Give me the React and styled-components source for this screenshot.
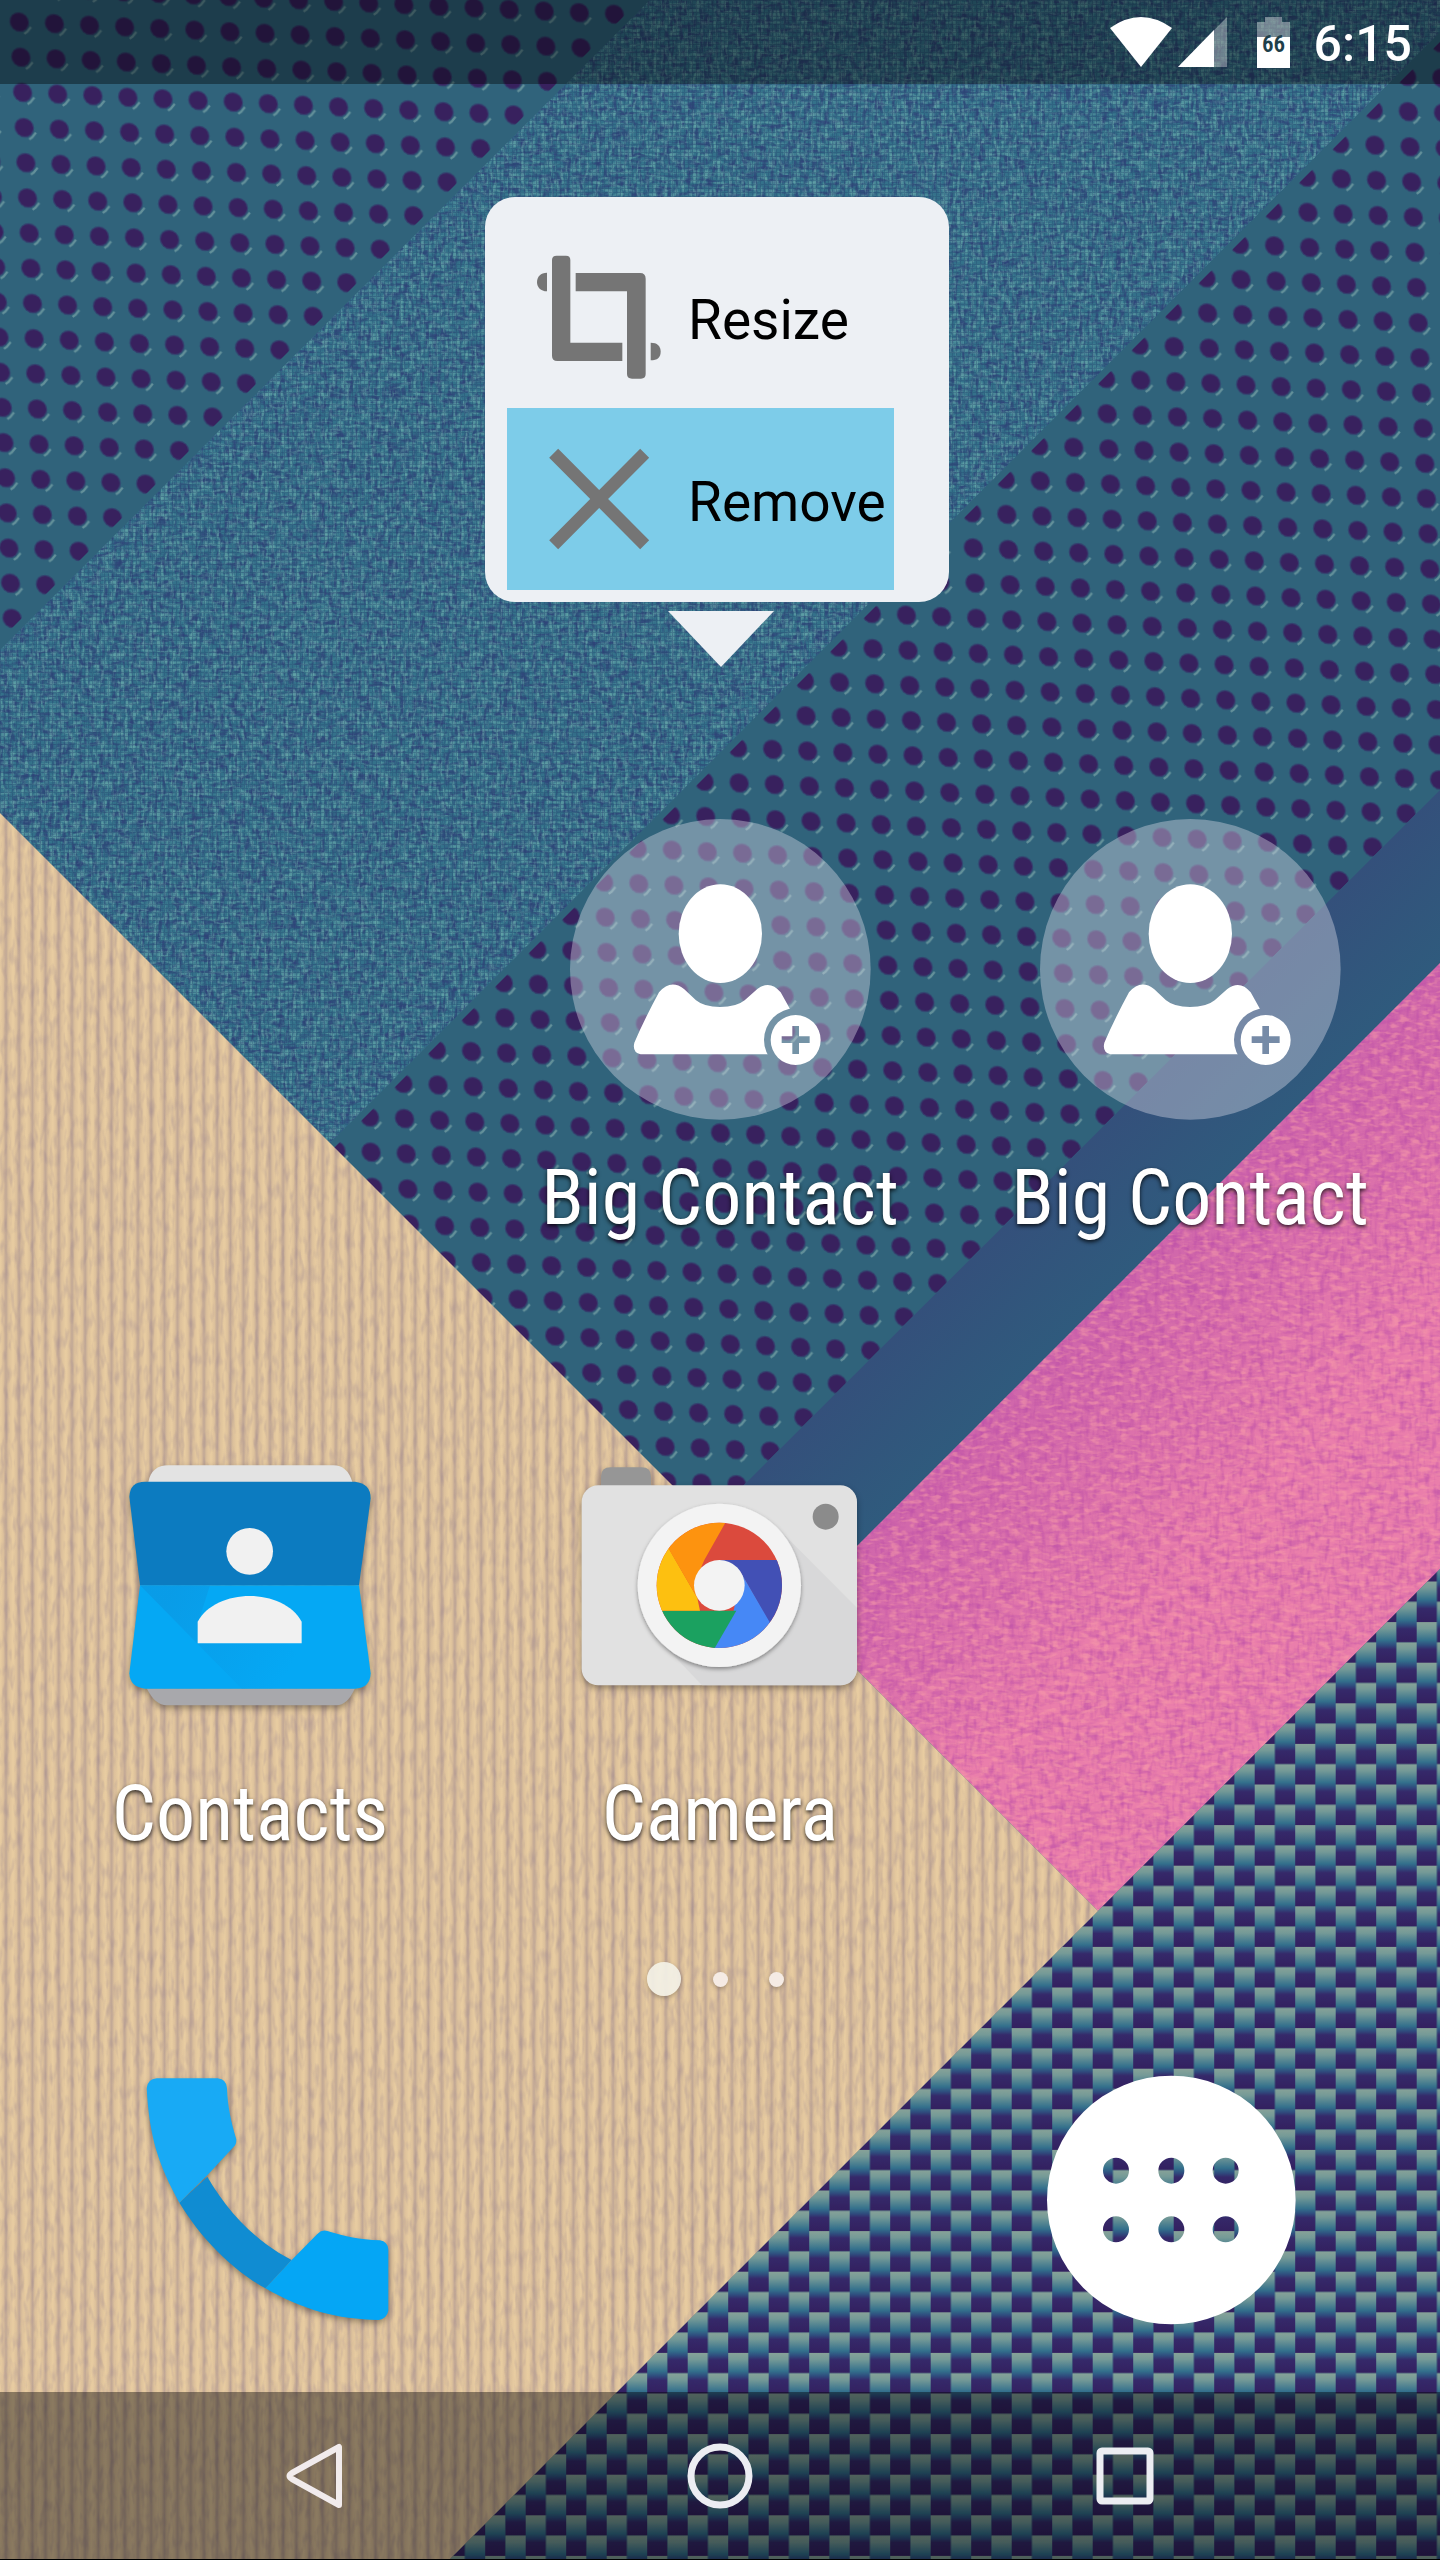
import styled, { createGlobalStyle } from "styled-components";

const GlobalStyle = createGlobalStyle`
  * { box-sizing: border-box; }
  body {
    margin: 0;
    font-family: Roboto, "Noto Sans", sans-serif;
  }
  button {
    border: 0;
    padding: 0;
    background: none;
    color: inherit;
    font: inherit;
    cursor: pointer;
  }
  svg { display: block; }
`;

const Screen = styled.div`
  position: relative;
  display: flex;
  flex-direction: column;
  min-height: 100vh;
  overflow: hidden;
  isolation: isolate;
`;

const WallpaperSvg = styled.svg`
  position: absolute;
  inset: 0;
  z-index: -1;
  width: 100%;
  height: 100%;
`;

const StatusBar = styled.header`
  display: flex;
  align-items: center;
  justify-content: flex-end;
  height: 84px;
  padding-right: 28px;
  background: rgba(0, 0, 0, 0.38);
  color: #fff;
`;

const StatusIcon = styled.svg`
  margin-right: ${({ $gap }) => $gap}px;
`;

const Clock = styled.time`
  padding-top: 4px;
  font-size: 50px;
  line-height: 60px;
  font-weight: 500;
`;

const Workspace = styled.main`
  flex: 1;
  display: grid;
  grid-template-columns: repeat(3, 1fr);
  align-content: end;
  row-gap: 216px;
  padding: 0 15px;
`;

const Cell = styled.div`
  position: relative;
  grid-column: ${({ $column }) => $column};
  display: flex;
  justify-content: center;
`;

const Shortcut = styled.button`
  display: flex;
  flex-direction: column;
  align-items: center;
  gap: ${({ $gap }) => $gap}px;
`;

const ShortcutLabel = styled.span`
  font-family: "Roboto Condensed", Roboto, sans-serif;
  font-size: 78px;
  line-height: 92px;
  color: #fff;
  white-space: nowrap;
  text-shadow: 0 2px 4px rgba(0, 0, 0, 0.8);
`;

const ShadowSvg = styled.svg`
  overflow: visible;
  filter: drop-shadow(0 3px 3px rgba(0, 0, 0, 0.35));
`;

// floats above the widget that was long-pressed
const Popup = styled.div`
  position: absolute;
  bottom: calc(100% + 152px);
  left: 0;
  display: flex;
  flex-direction: column;
  gap: 9px;
`;

const PopupCard = styled.div`
  width: 464px;
  padding: 29px 55px 12px 22px;
  border-radius: 30px;
  background: #edf0f4;
`;

const PopupArrow = styled.svg`
  margin-left: 183px;
`;

const PopupItem = styled.button`
  display: flex;
  align-items: center;
  gap: 27px;
  width: 100%;
  height: 182px;
  padding-left: 30px;
  background: ${({ $active }) => ($active ? "#7dcce9" : "transparent")};
  color: #000;
  font-size: 55px;
  line-height: 66px;
`;

const PopupLabel = styled.span`
  padding-top: 6px;
`;

const PageDots = styled.nav`
  display: flex;
  align-items: center;
  justify-content: center;
  height: 40px;
  margin: 99px 0 76px;
`;

const PageDot = styled.button`
  display: flex;
  justify-content: center;
  width: 56px;
  &::before {
    content: "";
    width: ${({ $active }) => ($active ? 34 : 15)}px;
    height: ${({ $active }) => ($active ? 34 : 15)}px;
    border-radius: 50%;
    background: ${({ $active }) => ($active ? "rgba(243, 241, 230, 0.92)" : "#f5ebe4")};
    box-shadow: 0 2px 4px rgba(0, 0, 0, 0.25);
  }
`;

const Dock = styled.div`
  display: flex;
  justify-content: space-between;
  padding: 0 143px 67px;
`;

const NavBar = styled.nav`
  display: grid;
  grid-template-columns: repeat(3, 1fr);
  height: 168px;
  padding: 0 112px;
  border-bottom: 1px solid #000;
  background: rgba(0, 0, 0, 0.4);
`;

const NavButton = styled.button`
  display: flex;
  align-items: center;
  justify-content: center;
`;

// Noise turned into a single coloured layer: alpha = gain * noise - cut
const ThreadFilter = ({ id, freq, seed, rgb, gain, cut }) => (
  <filter id={id} x="0" y="0" width="100%" height="100%" colorInterpolationFilters="sRGB">
    <feTurbulence type="fractalNoise" baseFrequency={freq} numOctaves="2" seed={seed} />
    <feColorMatrix
      values={`0 0 0 0 ${rgb[0]}  0 0 0 0 ${rgb[1]}  0 0 0 0 ${rgb[2]}  ${gain} 0 0 0 ${-cut}`}
    />
  </filter>
);

const PerforatedPattern = ({ id, x, y }) => (
  <pattern
    id={id}
    width="35"
    height="35"
    patternUnits="userSpaceOnUse"
    patternTransform={`matrix(1.003 .046 .047 1.005 ${x} ${y})`}
  >
    <path d="M22 29 l3 -2 l4 -5" fill="none" stroke="#7fa9ab" strokeWidth="2.2" opacity=".65" />
    <circle cx="17.5" cy="17.5" r="10" fill="#352a66" opacity=".6" />
    <circle cx="17.5" cy="17.5" r="8.8" fill="#38215e" />
  </pattern>
);

const Wallpaper = () => (
  <WallpaperSvg viewBox="0 0 1440 2560" preserveAspectRatio="xMidYMid slice" aria-hidden="true">
    <defs>
      <ThreadFilter id="blueWarp" freq=".24 .07" seed="3" rgb={[0.19, 0.25, 0.47]} gain={4} cut={1.9} />
      <ThreadFilter id="blueWeft" freq=".07 .24" seed="8" rgb={[0.19, 0.25, 0.47]} gain={4} cut={1.95} />
      <ThreadFilter id="blueLightWarp" freq=".28 .1" seed="14" rgb={[0.46, 0.72, 0.7]} gain={4} cut={1.95} />
      <ThreadFilter id="blueLightWeft" freq=".1 .28" seed="21" rgb={[0.42, 0.68, 0.68]} gain={4} cut={1.95} />
      <ThreadFilter id="pinkWarp" freq=".2 .06" seed="5" rgb={[0.72, 0.29, 0.66]} gain={3} cut={1.4} />
      <ThreadFilter id="pinkWeft" freq=".06 .2" seed="9" rgb={[0.72, 0.29, 0.66]} gain={3} cut={1.4} />
      <ThreadFilter id="pinkLight" freq=".1 .22" seed="31" rgb={[0.98, 0.62, 0.66]} gain={4} cut={1.9} />
      <ThreadFilter id="cordNoise" freq=".2 .06" seed="12" rgb={[0.55, 0.47, 0.55]} gain={2.4} cut={1.1} />
      <PerforatedPattern id="perfTop" x={4.2} y={74} />
      <PerforatedPattern id="perfBottom" x={526.6} y={1106.6} />
      <pattern id="grain" width="4" height="4" patternUnits="userSpaceOnUse">
        <path d="M0 .5H4M.5 0V4" stroke="#24466e" strokeWidth="1" opacity=".35" />
      </pattern>
      <linearGradient id="cordShade">
        <stop offset="0" stopColor="#e9cda1" />
        <stop offset=".25" stopColor="#dcc09b" />
        <stop offset=".45" stopColor="#bfa695" />
        <stop offset=".65" stopColor="#dcc09b" />
        <stop offset="1" stopColor="#e9cda1" />
      </linearGradient>
      <pattern id="cord" width="13.2" height="20" patternUnits="userSpaceOnUse">
        <rect width="13.2" height="20" fill="url(#cordShade)" />
      </pattern>
      <linearGradient id="strand" x1="0" y1="0" x2="0" y2="1">
        <stop offset="0" stopColor="#87a298" />
        <stop offset=".16" stopColor="#759a97" />
        <stop offset=".45" stopColor="#33708c" />
        <stop offset=".57" stopColor="#2f4c7e" />
        <stop offset=".67" stopColor="#35296a" />
        <stop offset="1" stopColor="#33205f" />
      </linearGradient>
      <pattern
        id="carbon"
        width="40.5"
        height="40.6"
        patternUnits="userSpaceOnUse"
        patternTransform="translate(1011.7 2109.3)"
      >
        <rect width="20.3" height="40.6" fill="url(#strand)" />
        <rect x="20.3" y="-20.3" width="20.3" height="40.6" fill="url(#strand)" />
        <rect x="20.3" y="20.3" width="20.3" height="40.6" fill="url(#strand)" />
      </pattern>
      <linearGradient id="pinkBase" gradientUnits="userSpaceOnUse" x1="1120" y1="1283" x2="1290" y2="1453">
        <stop offset="0" stopColor="#cf66ab" />
        <stop offset="1" stopColor="#ea7eab" />
      </linearGradient>
      <linearGradient id="band" gradientUnits="userSpaceOnUse" x1="1070" y1="1160" x2="1160" y2="1250">
        <stop offset="0" stopColor="#34507b" />
        <stop offset="1" stopColor="#2f5b7d" />
      </linearGradient>
      <clipPath id="fabricClip"><path d="M650 0 H1472 L330 1143 L0 813 V650Z" /></clipPath>
      <clipPath id="pinkClip"><path d="M1440 963 V1569 L1098 1911 L795 1608Z" /></clipPath>
      <clipPath id="beigeClip"><path d="M0 813 L1098 1911 L449 2560 H0Z" /></clipPath>
    </defs>

    <rect width="1440" height="2560" fill="#30637b" />
    <path d="M0 0 H640 L0 640Z" fill="url(#perfTop)" />
    <g clipPath="url(#fabricClip)">
      <rect width="1440" height="1150" fill="#34718a" />
      <rect width="1440" height="1150" filter="url(#blueWarp)" opacity=".7" />
      <rect width="1440" height="1150" filter="url(#blueWeft)" opacity=".7" />
      <rect width="1440" height="1150" filter="url(#blueLightWarp)" opacity=".5" />
      <rect width="1440" height="1150" filter="url(#blueLightWeft)" opacity=".5" />
      <rect width="1440" height="1150" fill="url(#grain)" />
    </g>
    <path d="M1472 10 L330 1152 L708 1521 L1440 790Z" fill="url(#perfBottom)" />
    <path d="M1440 790 V963 L795 1608 L708 1521Z" fill="url(#band)" />
    <g clipPath="url(#pinkClip)">
      <rect x="790" y="960" width="650" height="960" fill="url(#pinkBase)" />
      <rect x="790" y="960" width="650" height="960" filter="url(#pinkWarp)" opacity=".45" />
      <rect x="790" y="960" width="650" height="960" filter="url(#pinkWeft)" opacity=".45" />
      <rect x="790" y="960" width="650" height="960" filter="url(#pinkLight)" opacity=".5" />
    </g>
    <path d="M1440 1569 V2560 H449Z" fill="url(#carbon)" />
    <g clipPath="url(#beigeClip)">
      <rect y="800" width="1110" height="1760" fill="url(#cord)" />
      <rect y="800" width="1110" height="1760" filter="url(#cordNoise)" opacity=".3" />
    </g>
  </WallpaperSvg>
);

const WifiIcon = () => (
  <StatusIcon $gap={6} width="62" height="50" viewBox="0 0 62 50" aria-label="Wi-Fi">
    <path d="M0 11 Q31 -11 62 11 L31 50Z" fill="#fff" />
  </StatusIcon>
);

const SignalIcon = () => (
  <StatusIcon $gap={30} width="49" height="50" viewBox="0 0 49 50" aria-label="Signal">
    <path d="M49 0 V50 H0Z" fill="#fff" opacity=".35" />
    <path d="M36 13 V50 H0Z" fill="#fff" />
  </StatusIcon>
);

const BatteryIcon = () => (
  <StatusIcon $gap={24} width="33" height="51" viewBox="0 0 33 51" aria-label="Battery 66%">
    <path d="M8 0 H25 V5 H33 V20 H0 V5 H8Z" fill="#fff" opacity=".38" />
    <rect y="20" width="33" height="31" fill="#fff" />
    <text
      x="16.5"
      y="35"
      textAnchor="middle"
      fill="#1f3f4a"
      fontFamily="'Roboto Condensed', Roboto, sans-serif"
      fontSize="23"
      fontWeight="600"
    >
      66
    </text>
  </StatusIcon>
);

const ResizeIcon = () => (
  <svg width="124" height="124" viewBox="199 225 372 372" fill="#757575" aria-hidden="true">
    <path d="M229 278 C210 278 199 290 199 306 C199 322 210 334 229 334Z" />
    <path d="M258 227 H286 Q299 227 299 240 V488 H455 V543 H260 Q244 543 244 527 V240 Q244 227 258 227Z" />
    <path d="M315 279 H508 Q525 279 525 296 V582 Q525 596 511 596 H484 Q469 596 469 582 V334 H315Z" />
    <path d="M540 488 C560 488 570 498 570 515 C570 532 560 541 540 541Z" />
  </svg>
);

const CrossIcon = () => (
  <svg width="124" height="124" viewBox="197 771 372 372" aria-hidden="true">
    <path d="M247 820 L520 1094 M520 820 L247 1094" stroke="#757575" strokeWidth="38" />
  </svg>
);

const BigContactIcon = () => (
  <svg width="301" height="301" viewBox="118 57 903 903" aria-hidden="true">
    <mask id="badgeGap">
      <rect x="118" y="57" width="903" height="903" fill="#fff" />
      <circle cx="795" cy="720" r="95" fill="#000" />
    </mask>
    <circle cx="569" cy="508" r="451" fill="#dddbe8" opacity=".4" />
    <ellipse cx="569" cy="401" rx="125" ry="148" fill="#fff" />
    <path
      mask="url(#badgeGap)"
      d="M385 577 Q420 536 460 567 L496 601 Q520 621 568 621 Q618 621 642 601 L680 567 Q718 538 750 577 L830 720 V763 H330 Q304 758 311 728 Q340 660 385 577Z"
      fill="#fff"
    />
    <path
      fillRule="evenodd"
      d="M720 720 a75 75 0 1 0 150 0 a75 75 0 1 0 -150 0Z M785 678 H805 V709 H837 V729 H805 V762 H785 V729 H753 V709 H785Z"
      fill="#fff"
    />
  </svg>
);

const ContactsIcon = () => (
  <ShadowSvg width="280" height="250" viewBox="30 60 840 750" aria-hidden="true">
    <defs>
      <linearGradient id="contactsShade" gradientUnits="userSpaceOnUse" x1="200" y1="480" x2="560" y2="700">
        <stop offset="0" stopColor="#0b97e2" stopOpacity=".7" />
        <stop offset="1" stopColor="#0b97e2" stopOpacity="0" />
      </linearGradient>
    </defs>
    <path d="M145 126 Q155 76 205 76 H700 Q742 76 757 126Z" fill="#e3e3e3" />
    <path d="M140 745 Q165 796 200 796 H710 Q742 796 765 745Z" fill="#a8a8ac" />
    <path d="M120 436 L88 170 Q90 125 135 125 H765 Q812 130 812 175 L777 436Z" fill="#0c7bc0" />
    <path d="M120 436 H777 L812 700 Q810 745 765 746 H135 Q90 742 88 700Z" fill="#05a8f4" />
    <path d="M120 436 L425 746 H690 L560 610 H294 V550 L330 436Z" fill="url(#contactsShade)" />
    <circle cx="449" cy="334" r="70" fill="#f1f1f1" />
    <path d="M293 610 V545 C320 495 385 468 449 468 C513 468 578 495 605 545 V610Z" fill="#f1f1f1" />
  </ShadowSvg>
);

const CameraIcon = () => (
  <ShadowSvg width="280" height="250" viewBox="60 60 840 750" aria-hidden="true">
    <defs>
      <clipPath id="lensClip"><circle cx="478" cy="436" r="188" /></clipPath>
      <clipPath id="cameraBody"><rect x="65" y="136" width="826" height="600" rx="50" /></clipPath>
      <filter id="lensShadow" x="-20%" y="-20%" width="140%" height="140%">
        <feDropShadow dx="0" dy="6" stdDeviation="7" floodOpacity=".4" />
      </filter>
    </defs>
    <path d="M123 140 V110 Q123 82 152 82 H245 Q273 82 273 110 V140Z" fill="#969696" />
    <rect x="65" y="136" width="826" height="600" rx="50" fill="#e1e1e1" />
    <path d="M650 262 L900 512 V740 H430 L306 610Z" fill="#d4d4d6" clipPath="url(#cameraBody)" opacity=".7" />
    <circle cx="797" cy="230" r="39" fill="#8b8b8b" />
    <circle cx="478" cy="436" r="245" fill="#f3f3f3" filter="url(#lensShadow)" />
    <g clipPath="url(#lensClip)">
      <rect x="280" y="240" width="400" height="400" fill="#db4a3d" />
      <path d="M478 360 H700 V600 L640 570 L543 398Z" fill="#4250b5" />
      <path d="M543 398 L650 583 L620 660 H440 L521 512Z" fill="#4688f6" />
      <path d="M478 512 H529 L455 640 H260 V512Z" fill="#1ba160" />
      <path d="M420 512 H260 V300 L325 323 L412 474Z" fill="#fdc010" />
      <path d="M325 325 L340 220 H512 L433 360 L403 430 L412 474Z" fill="#fd930f" />
    </g>
    <circle cx="478" cy="436" r="76" fill="#f3f3f3" />
  </ShadowSvg>
);

const PhoneIcon = () => (
  <ShadowSvg width="250" height="250" viewBox="69 75 750 750" aria-hidden="true">
    <path d="M178 458 L262 380 C320 480 400 570 515 630 L436 715 C330 655 240 560 178 458Z" fill="#108cd2" />
    <path d="M110 85 H293 Q320 88 321 115 C323 170 333 215 349 268 Q350 283 340 292 L262 376 L178 458 C115 345 88 260 80 115 Q82 88 110 85Z" fill="#18aaf5" />
    <path d="M436 715 L515 630 L592 552 Q606 538 622 543 C680 560 715 568 780 571 Q803 575 805 598 V783 Q800 806 776 810 C650 808 550 780 436 715Z" fill="#05a6f5" />
  </ShadowSvg>
);

const holes = [[348, 392], [514, 392], [677, 392], [348, 568], [514, 568], [677, 568]];

const AppsIcon = () => (
  <svg width="250" height="250" viewBox="141 105 750 750" aria-hidden="true">
    <path
      fillRule="evenodd"
      fill="#fff"
      d={
        "M141 480 a373 373 0 1 0 746 0 a373 373 0 1 0 -746 0Z" +
        holes.map(([x, y]) => `M${x - 39} ${y} a39 39 0 1 0 78 0 a39 39 0 1 0 -78 0Z`).join("")
      }
    />
  </svg>
);

const App = () => (
  <>
    <GlobalStyle />
    <Screen>
      <Wallpaper />

      <StatusBar>
        <WifiIcon />
        <SignalIcon />
        <BatteryIcon />
        <Clock>6:15</Clock>
      </StatusBar>

      <Workspace>
        <Cell $column={2}>
          <Popup>
            <PopupCard>
              <PopupItem type="button">
                <ResizeIcon />
                <PopupLabel>Resize</PopupLabel>
              </PopupItem>
              <PopupItem type="button" $active>
                <CrossIcon />
                <PopupLabel>Remove</PopupLabel>
              </PopupItem>
            </PopupCard>
            <PopupArrow width="106" height="56" viewBox="0 0 106 56" aria-hidden="true">
              <path d="M0 0 H106 L53 56Z" fill="#edf0f4" />
            </PopupArrow>
          </Popup>
          <Shortcut type="button" $gap={32}>
            <BigContactIcon />
            <ShortcutLabel>Big Contact</ShortcutLabel>
          </Shortcut>
        </Cell>
        <Cell $column={3}>
          <Shortcut type="button" $gap={32}>
            <BigContactIcon />
            <ShortcutLabel>Big Contact</ShortcutLabel>
          </Shortcut>
        </Cell>
        <Cell $column={1}>
          <Shortcut type="button" $gap={58}>
            <ContactsIcon />
            <ShortcutLabel>Contacts</ShortcutLabel>
          </Shortcut>
        </Cell>
        <Cell $column={2}>
          <Shortcut type="button" $gap={58}>
            <CameraIcon />
            <ShortcutLabel>Camera</ShortcutLabel>
          </Shortcut>
        </Cell>
      </Workspace>

      <PageDots aria-label="Home screens">
        <PageDot type="button" aria-label="Page 1" $active />
        <PageDot type="button" aria-label="Page 2" />
        <PageDot type="button" aria-label="Page 3" />
      </PageDots>

      <Dock>
        <button type="button" aria-label="Phone">
          <PhoneIcon />
        </button>
        <button type="button" aria-label="All apps">
          <AppsIcon />
        </button>
      </Dock>

      <NavBar>
        <NavButton type="button" aria-label="Back">
          <svg width="66" height="66" viewBox="0 0 66 66" fill="none" stroke="#f1ebec" strokeWidth="6" strokeLinejoin="round">
            <path d="M57 4 V62 L10 36 Q5 33 10 30Z" />
          </svg>
        </NavButton>
        <NavButton type="button" aria-label="Home">
          <svg width="66" height="66" viewBox="0 0 66 66" fill="none" stroke="#ecedf2" strokeWidth="7">
            <circle cx="33" cy="33" r="29" />
          </svg>
        </NavButton>
        <NavButton type="button" aria-label="Recents">
          <svg width="66" height="66" viewBox="0 0 66 66" fill="none" stroke="#ecedf2" strokeWidth="7">
            <rect x="8" y="8" width="50" height="50" rx="2" />
          </svg>
        </NavButton>
      </NavBar>
    </Screen>
  </>
);

export default App;
